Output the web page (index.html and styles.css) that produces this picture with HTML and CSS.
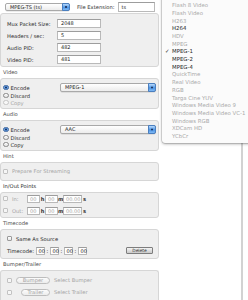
FILE: index.html
```html
<!DOCTYPE html>
<html>
<head>
<meta charset="utf-8">
<link rel="stylesheet" href="styles.css">
</head>
<body>
<div class="page">
  <div class="main">
    <div class="toprow">
      <div class="popup pop-fmt"><span>MPEG-TS (ts)</span><span class="arrows"><i class="up"></i><i class="dn"></i></span></div>
      <span class="lbl ext-lbl">File Extension:</span>
      <div class="field ext-field">ts</div>
    </div>
    <div class="box mux">
      <span class="lbl">Mux Packet Size:</span><div class="field">2048</div>
      <span class="lbl">Headers / sec:</span><div class="field">5</div>
      <span class="lbl">Audio PID:</span><div class="field">482</div>
      <span class="lbl">Video PID:</span><div class="field">481</div>
    </div>

    <div class="hdr">Video</div>
    <div class="box codec">
      <div class="row r1"><span class="radio on"></span><span class="lbl">Encode</span>
        <div class="popup pop-codec"><span>MPEG-1</span><span class="arrows"><i class="up"></i><i class="dn"></i></span></div></div>
      <div class="row"><span class="radio"></span><span class="lbl">Discard</span></div>
      <div class="row"><span class="radio dis"></span><span class="lbl dim">Copy</span></div>
    </div>

    <div class="hdr">Audio</div>
    <div class="box codec">
      <div class="row r1"><span class="radio on"></span><span class="lbl">Encode</span>
        <div class="popup pop-codec"><span>AAC</span><span class="arrows"><i class="up"></i><i class="dn"></i></span></div></div>
      <div class="row"><span class="radio"></span><span class="lbl">Discard</span></div>
      <div class="row"><span class="radio"></span><span class="lbl">Copy</span></div>
    </div>

    <div class="hdr">Hint</div>
    <div class="box hint">
      <div class="row"><span class="check dis"></span><span class="lbl dim">Prepare For Streaming</span></div>
    </div>

    <div class="hdr dark">In/Out Points</div>
    <div class="box inout">
      <div class="row tc"><span class="check dis"></span><span class="lbl dim io">In:</span>
        <span class="field sm">00</span><b>h</b><span class="field sm">00</span><b>m</b><span class="field md">00.00</span><b>s</b></div>
      <div class="row tc"><span class="check dis"></span><span class="lbl dim io">Out:</span>
        <span class="field sm">00</span><b>h</b><span class="field sm">00</span><b>m</b><span class="field md">00.00</span><b>s</b></div>
    </div>

    <div class="hdr">Timecode</div>
    <div class="box timecode">
      <div class="row"><span class="check"></span><span class="lbl">Same As Source</span></div>
      <div class="row tcrow"><span class="lbl">Timecode:</span>
        <span class="field xs">00</span><i class="colon">:</i><span class="field xs">00</span><i class="colon">:</i><span class="field xs">00</span><i class="colon">:</i><span class="field xs">00</span>
        <span class="btn-delete">Delete</span></div>
    </div>

    <div class="hdr">Bumper/Trailer</div>
    <div class="box bumper">
      <div class="row"><span class="check dis"></span><span class="pill">Bumper</span><span class="lbl dim">Select Bumper</span></div>
      <div class="row"><span class="check dis"></span><span class="pill narrow">Trailer</span><span class="lbl dim">Select Trailer</span></div>
    </div>
  </div>
  <div class="edge"></div>

  <div class="menu">
    <div class="item">DV</div>
    <div class="item">Flash 8 Video</div>
    <div class="item">Flash Video</div>
    <div class="item">H263</div>
    <div class="item on">H264</div>
    <div class="item">HDV</div>
    <div class="item">MPEG</div>
    <div class="item on"><span class="tick">✓</span>MPEG-1</div>
    <div class="item on">MPEG-2</div>
    <div class="item on">MPEG-4</div>
    <div class="item">QuickTime</div>
    <div class="item">Real Video</div>
    <div class="item">RGB</div>
    <div class="item">Targa Cine YUV</div>
    <div class="item">Windows Media Video 9</div>
    <div class="item">Windows Media Video VC-1</div>
    <div class="item">Windows RGB</div>
    <div class="item">XDCam HD</div>
    <div class="item">YCbCr</div>
  </div>
</div>
</body>
</html>
```

FILE: styles.css
```css
html, body {
  margin: 0;
  padding: 0;
}
body {
  width: 248px;
  height: 300px;
  overflow: hidden;
  background: #fff;
  font-family: "DejaVu Sans", "Liberation Sans", sans-serif;
  font-size: 5.2px;
  color: #2a2a2a;
}
.page {
  position: relative;
  display: flex;
  height: 300px;
}
.main {
  width: 159px;
  display: flex;
  flex-direction: column;
}
.edge {
  margin-left: 82px;
  width: 2px;
  background: #d2d2d2;
}

/* generic controls */
.lbl { white-space: nowrap; }
.dim { color: #a4a4a4; }
.field {
  box-sizing: border-box;
  height: 9px;
  border: 1px solid #b9b9b9;
  border-top-color: #9d9d9d;
  background: #fff;
  padding-left: 3px;
  line-height: 7px;
  font-size: 5px;
  color: #222;
}
.popup {
  position: relative;
  box-sizing: border-box;
  height: 9px;
  border: 1px solid #a9a9a9;
  border-radius: 2px;
  background: linear-gradient(#ffffff, #ececec);
  padding-left: 4px;
  line-height: 7px;
  font-size: 5px;
  color: #222;
  box-shadow: 0 0.5px 0.5px rgba(0,0,0,0.15);
}
.popup .arrows {
  position: absolute;
  right: -1px;
  top: -1px;
  bottom: -1px;
  width: 8px;
  border-radius: 0 2px 2px 0;
  background: linear-gradient(#b9dafc, #4c95e6 55%, #7fb8f4);
  border: 0.5px solid #4a7fc0;
  box-sizing: border-box;
}
.arrows i {
  position: absolute;
  left: 2px;
  width: 0;
  height: 0;
  border-left: 1.5px solid transparent;
  border-right: 1.5px solid transparent;
}
.arrows .up { top: 1.6px; border-bottom: 2px solid #1c2f55; }
.arrows .dn { bottom: 1.6px; border-top: 2px solid #1c2f55; }

.radio {
  box-sizing: border-box;
  width: 5.5px;
  height: 5.5px;
  border-radius: 50%;
  border: 0.6px solid #8a8a8a;
  background: linear-gradient(#fdfdfd, #dedede);
  margin-right: 2px;
  flex: none;
}
.radio.on {
  border-color: #35609c;
  background: radial-gradient(circle at 50% 50%, #1b3566 0 0.9px, #5a9ae6 1.2px, #a9d0fb 100%);
}
.radio.dis { border-color: #c6c6c6; background: #f7f7f7; }
.check {
  box-sizing: border-box;
  width: 5px;
  height: 5px;
  border: 0.6px solid #9a9a9a;
  border-radius: 1px;
  background: linear-gradient(#fff, #e6e6e6);
  margin-right: 4px;
  flex: none;
}
.check.dis { border-color: #c2c2c2; background: #f6f6f6; }

/* top row */
.toprow {
  height: 20px;
  display: flex;
  align-items: center;
  padding-left: 5px;
  padding-top: 1px;
  box-sizing: border-box;
}
.pop-fmt { width: 65px; height: 8px; line-height: 6px; }
.ext-lbl { margin-left: 7px; color: #333; }
.ext-field { width: 37px; height: 10px; margin-left: 3px; margin-top: -1px; line-height: 8px; }

/* boxes */
.box {
  box-sizing: border-box;
  background: #efefef;
  border: 1px solid #d6d6d6;
  border-radius: 3px;
}
.hdr {
  height: 11px;
  line-height: 11px;
  padding-left: 3px;
  color: #4a4a4a;
}
.hdr.dark { color: #2a2a2a; }

.mux {
  display: grid;
  grid-template-columns: 50px 44px;
  grid-auto-rows: 9px;
  row-gap: 3px;
  align-items: center;
  padding: 5px 0 2px 6px;
}

.row {
  display: flex;
  align-items: center;
  height: 7px;
}
.codec { padding: 4px 2px 2px 2px; }
.codec .r1 { height: 9px; }
.pop-codec { margin-left: auto; width: 96px; }

.hint { padding: 4px 2px 5px 2px; }
.hint .row { height: 8px; }

.inout { padding: 1px 2px 2px 2px; }
.inout .row { height: 9px; }
.inout .row + .row { margin-top: 3px; }
.io { width: 15px; }
.field.sm { width: 13px; height: 8px; line-height: 6px; color: #a4a4a4; padding-left: 2px; }
.field.md { width: 19px; height: 8px; line-height: 6px; color: #a4a4a4; padding-left: 2px; }
.tc b { font-weight: bold; width: 5px; text-align: center; color: #333; }

.timecode { padding: 4px 2px 3px 6px; }
.timecode .row { height: 9px; }
.timecode .row + .row { margin-top: 3px; }
.tcrow .lbl { width: 29px; }
.field.xs { width: 8.5px; height: 8px; line-height: 6px; padding-left: 1.5px; }
.colon { font-style: normal; width: 5.5px; text-align: center; }
.btn-delete {
  margin-left: auto;
  margin-right: 3px;
  box-sizing: border-box;
  width: 27px;
  height: 7px;
  line-height: 5px;
  text-align: center;
  font-size: 4.4px;
  color: #333;
  border: 0.6px solid #7d7d7d;
  border-radius: 1px;
  background: linear-gradient(#f4f4f4, #c9c9c9);
}

.bumper { padding: 3px 2px 2px 6px; flex: 1; border-bottom: none; border-radius: 3px 3px 0 0; }
.bumper .row { height: 12px; }
.pill {
  box-sizing: border-box;
  width: 34px;
  height: 7px;
  line-height: 5px;
  border: 0.6px solid #bdbdbd;
  border-radius: 4px;
  background: linear-gradient(#fcfcfc, #ececec);
  text-align: center;
  color: #a4a4a4;
  margin-right: 4px;
}
.pill.narrow { width: 29px; margin-left: 5px; }

/* popup menu */
.menu {
  position: absolute;
  left: 162px;
  top: -5.4px;
  width: 92px;
  padding-bottom: 2px;
  background: #fbfbfb;
  box-shadow: 0 1px 3px rgba(0,0,0,0.35), 0 0 0 0.5px rgba(0,0,0,0.18);
  border-radius: 0 0 3px 3px;
}
.item {
  position: relative;
  height: 7.7px;
  line-height: 7.7px;
  padding-left: 10px;
  font-size: 5.4px;
  color: #a9a9a9;
  white-space: nowrap;
}
.item.on { color: #1f1f1f; }
.tick { position: absolute; left: 3px; }
```
